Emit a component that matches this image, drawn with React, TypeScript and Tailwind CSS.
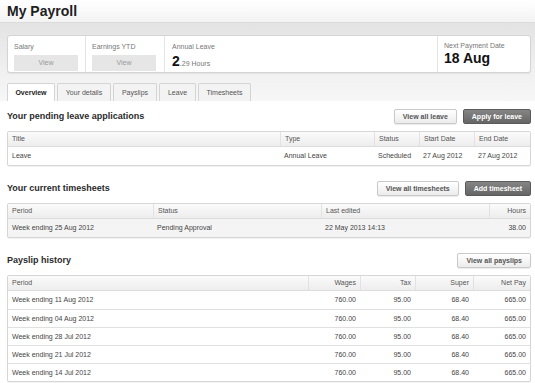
import React from "react";

const light =
  "h-[15px] px-[8px] border border-[#c9c9c9] rounded-[2px] bg-gradient-to-b from-white to-[#ececec] text-[7px] font-bold text-[#555] leading-[13px] shadow-[0_1px_1px_rgba(0,0,0,0.08)]";
const dark =
  "h-[15px] px-[8px] border border-[#5a5a5a] rounded-[2px] bg-gradient-to-b from-[#858585] to-[#666] text-[7px] font-bold text-white leading-[13px]";

function SectionHead({ title, children }: { title: string; children?: React.ReactNode }) {
  return (
    <div className="flex items-center justify-between h-[15px]">
      <h2 className="text-[9px] font-bold text-[#2b2b2b]">{title}</h2>
      <div className="flex gap-[6px]">{children}</div>
    </div>
  );
}

type Col = { label: string; w: string; right?: boolean };

function Table({ cols, rows, shaded }: { cols: Col[]; rows: string[][]; shaded?: boolean }) {
  return (
    <div
      className={`mt-[7px] border border-[#d6d6d6] rounded-[2px] shadow-[0_1px_1px_rgba(0,0,0,0.06)] ${
        shaded ? "bg-[#f4f4f4]" : "bg-white"
      }`}
    >
      <div className="flex h-[15px] bg-gradient-to-b from-[#fbfbfb] to-[#ededed] border-b border-[#dcdcdc] text-[7px] text-[#555]">
        {cols.map((c, i) => (
          <div
            key={c.label}
            className={`${c.w} px-[4px] leading-[14px] ${c.right ? "text-right" : ""} ${
              i > 0 ? "border-l border-[#e2e2e2]" : ""
            }`}
          >
            {c.label}
          </div>
        ))}
      </div>
      {rows.map((r, ri) => (
        <div
          key={ri}
          className={`flex h-[18px] text-[7px] text-[#444] ${ri > 0 ? "border-t border-[#e0e0e0]" : ""}`}
        >
          {r.map((v, i) => (
            <div key={i} className={`${cols[i].w} px-[4px] leading-[17px] ${cols[i].right ? "text-right" : ""}`}>
              {v}
            </div>
          ))}
        </div>
      ))}
    </div>
  );
}

const payslips = ["11 Aug", "04 Aug", "28 Jul", "21 Jul", "14 Jul"].map((d) => [
  `Week ending ${d} 2012`,
  "760.00",
  "95.00",
  "68.40",
  "665.00",
]);

export default function App() {
  const tabs = [
    { t: "Overview", w: "w-[48px]" },
    { t: "Your details", w: "w-[54px]" },
    { t: "Payslips", w: "w-[44px]" },
    { t: "Leave", w: "w-[37px]" },
    { t: "Timesheets", w: "w-[53px]" },
  ];

  return (
    <div className="w-[535px] h-[383px] overflow-hidden bg-white font-['Liberation_Sans',Arial,sans-serif] text-[#444]">
      <div className="h-[22px] px-[7px] bg-gradient-to-b from-white to-[#f3f3f3]">
        <h1 className="text-[14px] font-bold text-[#1e1e1e] leading-[22px]">My Payroll</h1>
      </div>

      <div className="pl-[7px] pr-[4px] pt-[12px] bg-gradient-to-b from-[#e3e3e3] via-[#eeeeee] to-[#f7f7f7] border-t border-[#dcdcdc]">
        <div className="flex h-[38px] bg-white border border-[#d4d4d4] rounded-[3px] shadow-[0_1px_1px_rgba(0,0,0,0.06)]">
          <div className="w-[78px] px-[6px] pt-[7px] border-r border-[#e4e4e4]">
            <div className="text-[7px] text-[#777] leading-[8px]">Salary</div>
            <div className="mt-[4px] h-[16px] w-[64px] bg-[#e6e6e6] text-[7px] text-[#999] text-center leading-[16px]">View</div>
          </div>
          <div className="w-[79px] px-[6px] pt-[7px] border-r border-[#e4e4e4]">
            <div className="text-[7px] text-[#777] leading-[8px]">Earnings YTD</div>
            <div className="mt-[4px] h-[16px] w-[64px] bg-[#e6e6e6] text-[7px] text-[#999] text-center leading-[16px]">View</div>
          </div>
          <div className="w-[273px] px-[7px] pt-[7px] border-r border-[#e4e4e4]">
            <div className="text-[7px] text-[#777] leading-[8px]">Annual Leave</div>
            <div className="mt-[2px] flex items-baseline">
              <span className="text-[14px] font-bold text-[#111] leading-[16px]">2</span>
              <span className="text-[7px] text-[#777]">.29 Hours</span>
            </div>
          </div>
          <div className="flex-1 px-[6px] pt-[6px]">
            <div className="text-[7px] text-[#777] leading-[8px]">Next Payment Date</div>
            <div className="text-[14px] font-bold text-[#111] leading-[17px]">18 Aug</div>
          </div>
        </div>

        <div className="mt-[10px] flex gap-[2px] items-end h-[18px]">
          {tabs.map((tab, i) => (
            <div
              key={tab.t}
              className={`${tab.w} h-[18px] border border-b-0 border-[#d4d4d4] rounded-t-[2px] text-[7px] text-center leading-[17px] ${
                i === 0 ? "bg-white text-[#222] font-bold" : "bg-[#f3f3f3] text-[#555]"
              }`}
            >
              {tab.t}
            </div>
          ))}
        </div>
      </div>

      <div className="pl-[7px] pr-[4px] pt-[8px]">
        <SectionHead title="Your pending leave applications">
          <button className={light}>View all leave</button>
          <button className={dark}>Apply for leave</button>
        </SectionHead>
        <Table
          cols={[
            { label: "Title", w: "w-[272px]" },
            { label: "Type", w: "w-[94px]" },
            { label: "Status", w: "w-[45px]" },
            { label: "Start Date", w: "w-[55px]" },
            { label: "End Date", w: "flex-1" },
          ]}
          rows={[["Leave", "Annual Leave", "Scheduled", "27 Aug 2012", "27 Aug 2012"]]}
        />

        <div className="mt-[15px]">
          <SectionHead title="Your current timesheets">
            <button className={light}>View all timesheets</button>
            <button className={dark}>Add timesheet</button>
          </SectionHead>
        </div>
        <Table
          shaded
          cols={[
            { label: "Period", w: "w-[145px]" },
            { label: "Status", w: "w-[168px]" },
            { label: "Last edited", w: "w-[168px]" },
            { label: "Hours", w: "flex-1", right: true },
          ]}
          rows={[["Week ending 25 Aug 2012", "Pending Approval", "22 May 2013 14:13", "38.00"]]}
        />

        <div className="mt-[15px]">
          <SectionHead title="Payslip history">
            <button className={light}>View all payslips</button>
          </SectionHead>
        </div>
        <Table
          cols={[
            { label: "Period", w: "w-[300px]" },
            { label: "Wages", w: "w-[52px]", right: true },
            { label: "Tax", w: "w-[55px]", right: true },
            { label: "Super", w: "w-[58px]", right: true },
            { label: "Net Pay", w: "flex-1", right: true },
          ]}
          rows={payslips}
        />
      </div>
    </div>
  );
}
